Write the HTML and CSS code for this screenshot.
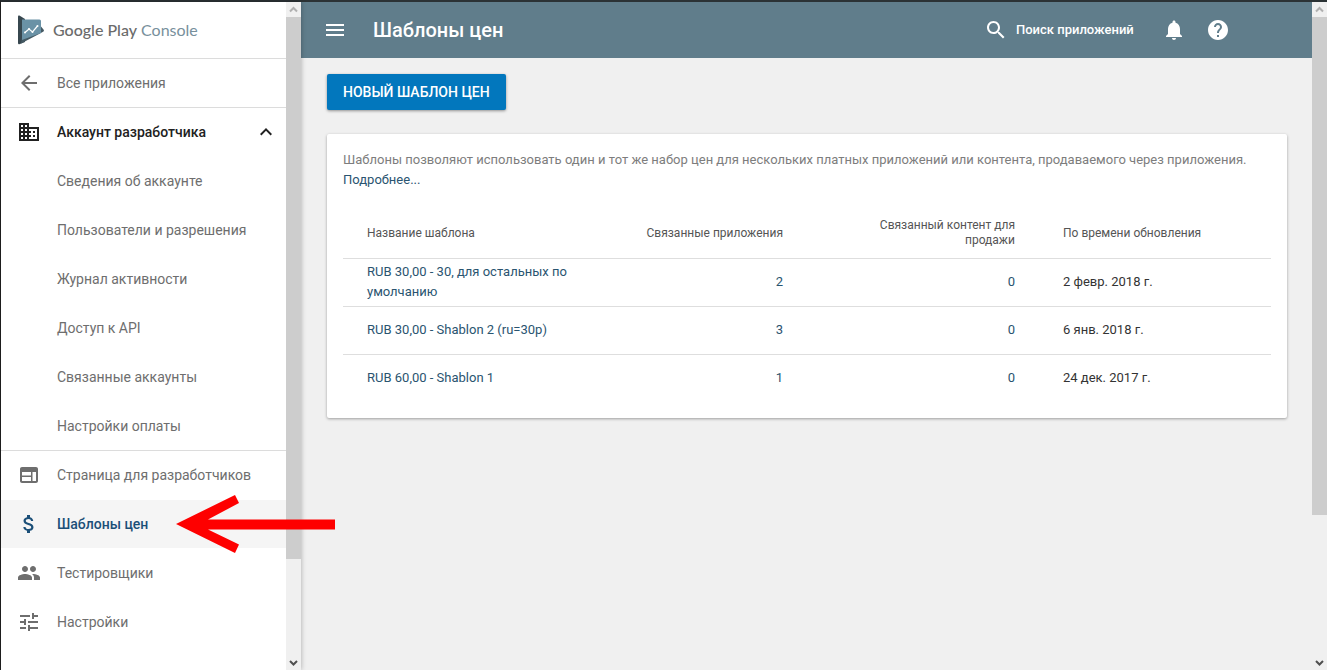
FILE: index.html
```html
<!DOCTYPE html>
<html lang="ru">
<head>
    <meta charset="UTF-8">
    <meta name="viewport" content="width=device-width, initial-scale=1.0">
    <title>Шаблоны цен</title>
    <link rel="stylesheet" href="styles.css">
</head>
<body>
    <div class="app">
        <aside class="sidebar">
            <div class="sidebar-content">
                <a href="#" class="logo">
                    <svg width="28" height="30" viewBox="0 0 28 30">
                        <path d="M1 1.500Q1 0 2.400 .6L8 4v23l-5.600 2.200Q1 29.500 1 28z" fill="#37474f"/>
                        <path d="M4 28.500L23 18.500 26.500 16.500Q27.500 15.500 26.500 14.500L24 11.500 5 22z" fill="#455a64"/>
                        <path d="M5 4.500h17.500q1.500 0 1.500 1.500v12L5 25z" fill="#6a92a6"/>
                        <path d="M8 17.500l4-3.500 3.500 3 5-6" fill="none" stroke="#fff" stroke-width="1.200"/>
                        <circle cx="8" cy="17.500" r="1" fill="#fff"/>
                        <circle cx="12" cy="14" r="1" fill="#fff"/>
                        <circle cx="15.500" cy="17" r="1" fill="#fff"/>
                        <circle cx="20.500" cy="11" r="1" fill="#fff"/>
                    </svg>
                    <span><b>Google Play</b> Console</span>
                </a>
                <nav>
                    <ul class="menu">
                        <li class="line">
                            <a href="#">
                                <svg class="icon" viewBox="0 0 24 24"><path d="M20 11H7.830l5.590-5.590L12 4l-8 8 8 8 1.410-1.410L7.830 13H20v-2z"/></svg>
                                Все приложения
                            </a>
                        </li>
                        <li class="account">
                            <a href="#">
                                <svg class="icon" viewBox="0 0 24 24"><path d="M12 7V3H2v18h20V7H12zM6 19H4v-2h2v2zm0-4H4v-2h2v2zm0-4H4V9h2v2zm0-4H4V5h2v2zm4 12H8v-2h2v2zm0-4H8v-2h2v2zm0-4H8V9h2v2zm0-4H8V5h2v2zm10 12h-8v-2h2v-2h-2v-2h2v-2h-2V9h8v10zm-2-8h-2v2h2v-2zm0 4h-2v2h2v-2z"/></svg>
                                Аккаунт разработчика
                                <svg class="chevron" viewBox="0 0 24 24"><path d="M12 8l-6 6 1.410 1.410L12 10.830l4.590 4.580L18 14z"/></svg>
                            </a>
                        </li>
                        <li class="sub"><a href="#">Сведения об аккаунте</a></li>
                        <li class="sub"><a href="#">Пользователи и разрешения</a></li>
                        <li class="sub"><a href="#">Журнал активности</a></li>
                        <li class="sub"><a href="#">Доступ к API</a></li>
                        <li class="sub"><a href="#">Связанные аккаунты</a></li>
                        <li class="sub line"><a href="#">Настройки оплаты</a></li>
                        <li>
                            <a href="#">
                                <svg class="icon" viewBox="0 0 24 24"><path d="M19 4H5c-1.100 0-2 .9-2 2v12c0 1.100.9 2 2 2h14c1.100 0 2-.9 2-2V6c0-1.100-.9-2-2-2zm-5 14H5v-4h9v4zm0-5.500H5V9h9v3.500zm5 5.500h-3.500V9H19v9z"/></svg>
                                Страница для разработчиков
                            </a>
                        </li>
                        <li class="active">
                            <a href="#">
                                <svg class="icon" viewBox="0 0 24 24"><path d="M11.800 10.900c-2.270-.59-3-1.200-3-2.150 0-1.090 1.010-1.850 2.700-1.850 1.780 0 2.440.85 2.500 2.100h2.210c-.07-1.720-1.120-3.300-3.210-3.810V3h-3v2.160c-1.940.42-3.500 1.680-3.500 3.610 0 2.310 1.910 3.460 4.700 4.130 2.500.6 3 1.480 3 2.410 0 .69-.49 1.790-2.700 1.790-2.060 0-2.870-.92-2.980-2.100h-2.200c.12 2.190 1.760 3.420 3.680 3.830V21h3v-2.150c1.950-.37 3.500-1.500 3.500-3.550 0-2.840-2.430-3.810-4.700-4.400z"/></svg>
                                Шаблоны цен
                            </a>
                            <svg class="arrow" viewBox="0 0 160 60"><path d="M0 30L59 1l4 8-31 16.500h127v10H32l31 15-4 8.500z" fill="#fe0000"/></svg>
                        </li>
                        <li>
                            <a href="#">
                                <svg class="icon" viewBox="0 0 24 24"><path d="M16 11c1.660 0 2.990-1.340 2.990-3S17.660 5 16 5s-3 1.340-3 3 1.340 3 3 3zm-8 0c1.660 0 2.990-1.340 2.990-3S9.660 5 8 5 5 6.340 5 8s1.340 3 3 3zm0 2c-2.330 0-7 1.170-7 3.500V19h14v-2.500c0-2.330-4.670-3.500-7-3.500zm8 0c-.29 0-.62.02-.97.05 1.160.84 1.970 1.970 1.970 3.450V19h6v-2.500c0-2.330-4.670-3.500-7-3.500z"/></svg>
                                Тестировщики
                            </a>
                        </li>
                        <li>
                            <a href="#">
                                <svg class="icon" viewBox="0 0 24 24"><path d="M3 17v2h6v-2H3zM3 5v2h10V5H3zm10 16v-2h8v-2h-8v-2h-2v6h2zM7 9v2H3v2h4v2h2V9H7zm14 4v-2H11v2h10zm-6-4h2V7h4V5h-4V3h-2v6z"/></svg>
                                Настройки
                            </a>
                        </li>
                    </ul>
                </nav>
            </div>
            <div class="scrollbar">
                <svg class="up" viewBox="0 0 15 15"><path d="M4 9.500L7.500 6 11 9.500"/></svg>
                <div class="track"><div class="thumb" style="height: 85%"></div></div>
                <svg class="down" viewBox="0 0 15 15"><path d="M4 6l3.500 3.500L11 6"/></svg>
            </div>
        </aside>

        <div class="main">
            <header class="topbar">
                <button class="icon-button" aria-label="Меню">
                    <svg viewBox="0 0 24 24"><path d="M3 18h18v-2H3v2zm0-5h18v-2H3v2zm0-7v2h18V6H3z"/></svg>
                </button>
                <h1>Шаблоны цен</h1>
                <label class="search">
                    <svg viewBox="0 0 24 24"><path d="M15.500 14h-.79l-.28-.27C15.410 12.590 16 11.110 16 9.500 16 5.910 13.090 3 9.500 3S3 5.910 3 9.500 5.910 16 9.500 16c1.610 0 3.090-.59 4.230-1.570l.27.28v.79l5 4.990L20.490 19l-4.990-5zm-6 0C7.010 14 5 11.990 5 9.500S7.010 5 9.500 5 14 7.010 14 9.500 11.990 14 9.500 14z"/></svg>
                    <input type="text" placeholder="Поиск приложений" aria-label="Поиск приложений">
                </label>
                <button class="icon-button" aria-label="Уведомления">
                    <svg viewBox="0 0 24 24"><path d="M12 22c1.100 0 2-.9 2-2h-4c0 1.100.89 2 2 2zm6-6v-5c0-3.070-1.640-5.640-4.500-6.320V4c0-.83-.67-1.500-1.500-1.500s-1.500.67-1.500 1.500v.68C7.630 5.360 6 7.920 6 11v5l-2 2v1h16v-1l-2-2z"/></svg>
                </button>
                <button class="icon-button" aria-label="Справка">
                    <svg viewBox="0 0 24 24"><path d="M12 2C6.480 2 2 6.480 2 12s4.480 10 10 10 10-4.480 10-10S17.520 2 12 2zm1 17h-2v-2h2v2zm2.070-7.750l-.9.920C13.450 12.900 13 13.500 13 15h-2v-.5c0-1.100.45-2.100 1.170-2.830l1.240-1.260c.37-.36.59-.86.59-1.410 0-1.100-.9-2-2-2s-2 .9-2 2H8c0-2.210 1.790-4 4-4s4 1.790 4 4c0 .88-.36 1.680-.93 2.250z"/></svg>
                </button>
            </header>
            <main class="content">
                <button class="new-button">НОВЫЙ ШАБЛОН ЦЕН</button>
                <section class="card">
                    <p>Шаблоны позволяют использовать один и тот же набор цен для нескольких платных приложений или контента, продаваемого через приложения. <a href="#">Подробнее...</a></p>
                    <table>
                        <thead>
                            <tr>
                                <th>Название шаблона</th>
                                <th class="num">Связанные приложения</th>
                                <th class="num">Связанный контент для продажи</th>
                                <th>По времени обновления</th>
                            </tr>
                        </thead>
                        <tbody>
                            <tr>
                                <td><a href="#">RUB 30,00 - 30, для остальных по умолчанию</a></td>
                                <td class="num"><a href="#">2</a></td>
                                <td class="num"><a href="#">0</a></td>
                                <td>2 февр. 2018 г.</td>
                            </tr>
                            <tr>
                                <td><a href="#">RUB 30,00 - Shablon 2 (ru=30р)</a></td>
                                <td class="num"><a href="#">3</a></td>
                                <td class="num"><a href="#">0</a></td>
                                <td>6 янв. 2018 г.</td>
                            </tr>
                            <tr>
                                <td><a href="#">RUB 60,00 - Shablon 1</a></td>
                                <td class="num"><a href="#">1</a></td>
                                <td class="num"><a href="#">0</a></td>
                                <td>24 дек. 2017 г.</td>
                            </tr>
                        </tbody>
                    </table>
                </section>
            </main>
        </div>

        <div class="scrollbar">
            <svg class="up" viewBox="0 0 15 15"><path d="M4 9.500L7.500 6 11 9.500"/></svg>
            <div class="track"><div class="thumb" style="height: 78%"></div></div>
            <svg class="down" viewBox="0 0 15 15"><path d="M4 6l3.500 3.500L11 6"/></svg>
        </div>
    </div>
</body>
</html>
```
FILE: styles.css
```css
* {
    box-sizing: border-box;
}
body {
    margin: 0;
    font-family: Roboto, "Noto Sans", sans-serif;
    font-size: 13px;
    line-height: 20px;
    color: #333;
    background: #f0f0f0;
}
a {
    color: #2a5470;
    text-decoration: none;
}
button {
    font-family: inherit;
    border: none;
    cursor: pointer;
}
.app {
    display: flex;
    height: 100vh;
    border-top: 2px solid #2b3235;
    border-left: 1px solid #222;
}

/* sidebar */
.sidebar {
    display: flex;
    flex: none;
    width: 300px;
    background: #fff;
    box-shadow: 0 0 5px rgba(0, 0, 0, 0.3);
    position: relative;
    z-index: 1;
}
.sidebar-content {
    flex: 1;
}
.logo {
    display: flex;
    align-items: center;
    gap: 8px;
    height: 57px;
    padding-left: 16px;
    border-bottom: 1px solid #dcdcdc;
    font-family: Lato, sans-serif;
    font-size: 16px;
    color: #78909c;
}
.logo b {
    font-weight: 500;
    color: #6b6b6b;
}
.menu {
    list-style: none;
    margin: 0;
    padding: 0;
}
.menu li {
    position: relative;
    height: 49px;
    border-bottom: 1px solid #fff;
}
.menu .line {
    border-bottom-color: #dcdcdc;
}
.menu a {
    display: flex;
    align-items: center;
    gap: 16px;
    height: 48px;
    padding: 0 8px 0 16px;
    font-size: 14px;
    color: #6e6e6e;
}
.menu .sub a {
    padding-left: 56px;
}
.menu .account a {
    font-weight: 500;
    color: #212121;
}
.menu .active a {
    font-weight: 500;
    color: #1b4f78;
    background: #f5f5f5;
}
.icon, .chevron {
    width: 24px;
    height: 24px;
    flex: none;
    fill: currentColor;
}
.chevron {
    margin-left: auto;
}
.arrow {
    position: absolute;
    left: 175px;
    top: -6px;
    width: 160px;
    height: 60px;
}

/* scrollbars */
.scrollbar {
    display: flex;
    flex-direction: column;
    flex: none;
    width: 15px;
    background: #f0f0f0;
}
.scrollbar svg {
    width: 15px;
    height: 15px;
    fill: none;
    stroke: #505050;
    stroke-width: 2;
}
.scrollbar .up {
    stroke: #b0b0b0;
}
.track {
    flex: 1;
}
.thumb {
    background: #cdcdcd;
}

/* top bar */
.main {
    flex: 1;
    min-width: 0;
}
.topbar {
    display: flex;
    align-items: center;
    height: 56px;
    padding: 0 82px 0 22px;
    background: #607d8b;
    color: #fff;
}
.topbar svg {
    display: block;
    width: 24px;
    height: 24px;
    fill: #fff;
}
.topbar h1 {
    flex: 1;
    margin: 0 0 0 26px;
    font-size: 20px;
    font-weight: 500;
}
.icon-button {
    padding: 0;
    background: none;
}
.icon-button + .icon-button {
    margin-left: 20px;
}
.search {
    display: flex;
    align-items: center;
    gap: 8px;
    margin-right: 20px;
}
.search input {
    width: 126px;
    padding: 0 0 2px;
    border: none;
    outline: none;
    background: none;
    font-family: inherit;
    font-size: 13px;
    font-weight: 500;
    color: #fff;
}
.search input::placeholder {
    color: #fff;
}

/* page */
.content {
    padding: 16px 25px 0 26px;
}
.new-button {
    display: block;
    height: 36px;
    padding: 0 16px;
    border-radius: 2px;
    background: #0277bd;
    box-shadow: 0 1px 3px rgba(0, 0, 0, 0.4);
    font-size: 14px;
    font-weight: 500;
    color: #fff;
}
.card {
    margin-top: 24px;
    padding: 16px 16px 15px;
    border-radius: 2px;
    background: #fff;
    box-shadow: 0 1px 3px rgba(0, 0, 0, 0.35);
}
.card p {
    margin: 0 0 18px;
    color: #7d7d7d;
}
table {
    width: 100%;
    table-layout: fixed;
    border-collapse: separate;
    border-spacing: 0;
}
th, td {
    height: 48px;
    padding: 0 0 2px 24px;
    text-align: left;
    border-bottom: 1px solid #dedede;
}
th {
    height: 51px;
    padding-bottom: 0;
    font-size: 12px;
    line-height: 15px;
    font-weight: 400;
    color: #555;
}
tbody tr:last-child td {
    border-bottom: none;
}
.num {
    padding-right: 24px;
    text-align: right;
}
```
